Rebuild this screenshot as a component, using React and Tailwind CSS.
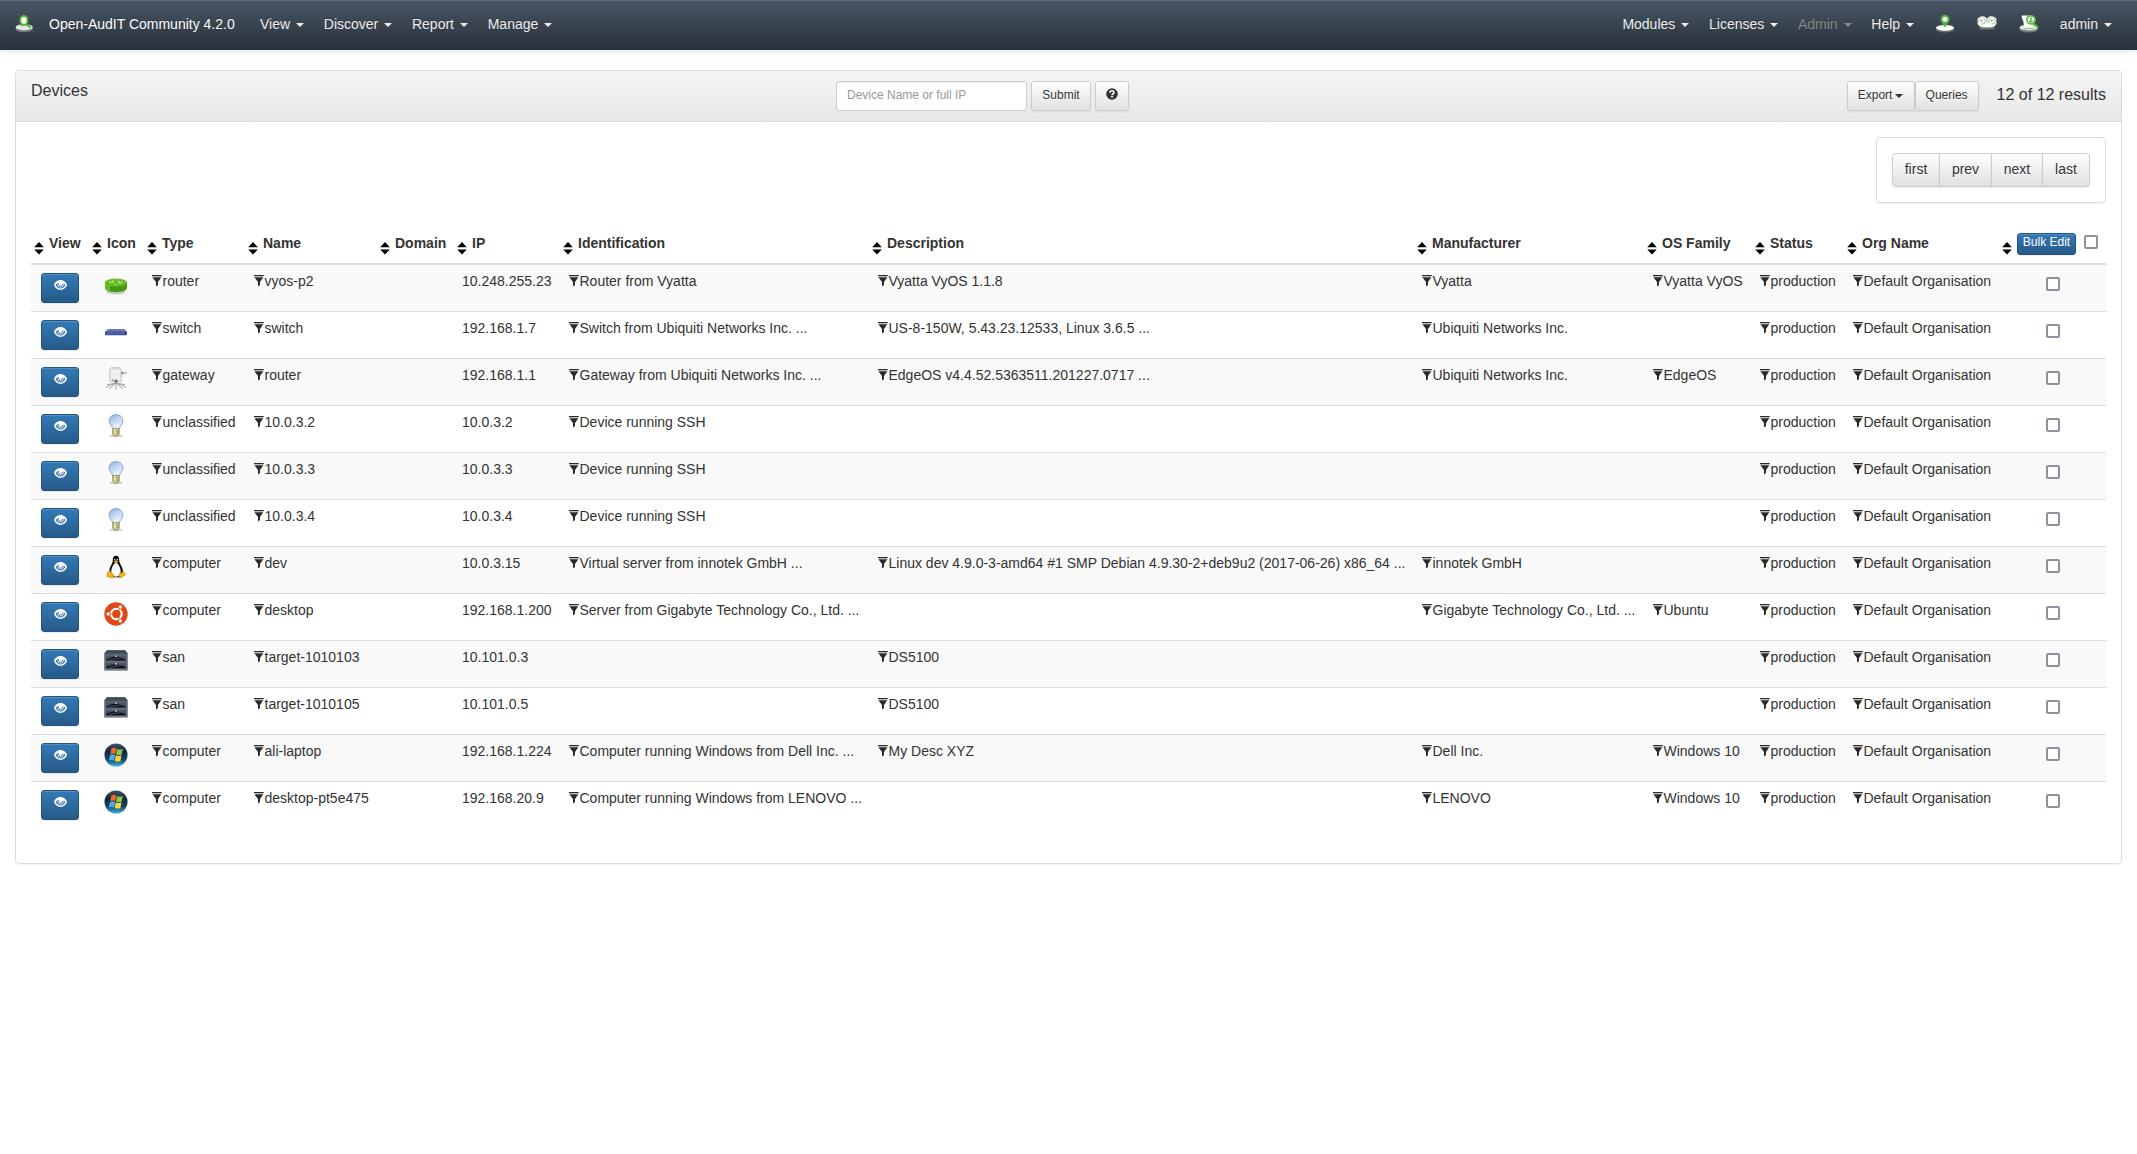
import React from "react";

const Caret = ({ className = "" }) => (
  <span className={`inline-block h-0 w-0 border-x-4 border-t-4 border-x-transparent border-t-current align-middle ${className}`} />
);

const Funnel = () => (
  <svg width="10" height="12" viewBox="0 0 10 12" className="mt-[2px] shrink-0">
    <path d="M0 0H9.7V1.3H0Z" fill="#2a2a2a" />
    <path d="M0.4 2.2H9.3L6 7V10L4 11.5V7Z" fill="#2a2a2a" />
  </svg>
);

const Sort = () => (
  <svg width="10" height="13" viewBox="0 0 10 13" className="mt-[9px] shrink-0">
    <path d="M5 0L9.8 5.2H0.2Z" fill="#000" />
    <path d="M0.2 7.4H9.8L5 12.6Z" fill="#000" />
  </svg>
);

const Eye = () => (
  <svg width="13" height="10" viewBox="0 0 13 10">
    <path fillRule="evenodd" d="M6.5 0C3 0 0.8 2.4 0 5 1 7.8 3.4 10 6.5 10S12 7.8 13 5C12.2 2.4 10 0 6.5 0ZM6.5 1.9C4 1.9 2.6 3.4 1.7 5 2.8 7.1 4.4 8.6 6.5 8.6S10.2 7.1 11.3 5C10.4 3.4 9 1.9 6.5 1.9Z" fill="#fff" />
    <path d="M9 1.8C10.2 3.2 9.9 5.4 8.8 6.5 7.4 7.8 5.2 7.7 4.1 6.4 3.1 5.2 3.1 3.2 4 1.9Z" fill="#fff" />
    <path d="M4.3 3C4.1 5.3 5 6.4 6.6 6.3 7.8 6.2 8.5 5.2 8.3 4" fill="none" stroke="#2c689d" strokeWidth="1" />
  </svg>
);

const RouterIcon = () => (
  <svg width="24" height="24" viewBox="0 0 24 24">
    <ellipse cx="12" cy="18.4" rx="9.5" ry="3" fill="#000" opacity="0.2" />
    <path d="M1 9.5V15C1 17.3 6 19.2 12 19.2S23 17.3 23 15V9.5Z" fill="#48990c" />
    <path d="M1 9.5V15C1 16.4 3 17.7 6 18.5V11Z" fill="#69b92c" />
    <ellipse cx="12" cy="9.5" rx="11" ry="4" fill="#63bb1f" />
    <path d="M5 9.4L10 8.6M8.3 7.4L10 8.6 7 9.8M19 9L14 9.6M16 8L14 9.6 17 10.6M12 6.6L14.6 7.2M10 11.6L13 12.1" stroke="#bfe7a0" strokeWidth="0.8" fill="none" />
  </svg>
);

const SwitchIcon = () => (
  <svg width="24" height="24" viewBox="0 0 24 24">
    <path d="M3.5 9H20.5L22.8 12H1.2Z" fill="#7480ae" />
    <path d="M1 11.4H23V14.3Q23 15.2 22 15.2H2Q1 15.2 1 14.3Z" fill="#3a4f95" />
    <path d="M3 13.3H10M12 13.3H20" stroke="#8f9bc6" strokeWidth="0.7" strokeDasharray="1.4 0.7" />
    <path d="M6 10.3H18" stroke="#4e5f9e" strokeWidth="0.9" strokeDasharray="2 1" />
  </svg>
);

const GatewayIcon = () => (
  <svg width="24" height="24" viewBox="0 0 24 24">
    <path d="M12 16L2 20M12 16L5 22M12 15V22.8M12 16L19 22M12 16L22 20M12 16L3 17.7M12 16L21 17.7" stroke="#999" strokeWidth="0.9" />
    <path d="M17 6H22.5" stroke="#9aa1a5" strokeWidth="1.3" />
    <path d="M17.4 4.2L19.5 6.2 17.4 8.2Z" fill="#2f82b5" />
    <path d="M7.5 0.3H15.5L17.2 2.6V14.3H5.8V2.2Z" fill="#efefed" stroke="#aaa" strokeWidth="0.7" />
    <path d="M7.5 0.5H15.5L16.6 2.4H6.8Z" fill="#d6d6d4" />
    <rect x="8" y="12.2" width="1.6" height="1.4" fill="#5bbb34" />
    <path d="M10.4 15.2V13.7Q12 11.4 13.6 13.7V15.2Z" fill="#80589a" />
  </svg>
);

const BulbIcon = () => (
  <svg width="24" height="24" viewBox="0 0 24 24">
    <defs>
      <linearGradient id="bulb" x1="0" y1="0" x2="0.6" y2="1">
        <stop offset="0" stopColor="#82a7de" />
        <stop offset="0.45" stopColor="#bdd3f2" />
        <stop offset="1" stopColor="#e8f1fc" />
      </linearGradient>
    </defs>
    <ellipse cx="12" cy="21.8" rx="7" ry="1.5" fill="#000" opacity="0.18" />
    <path d="M12 0.6C7.6 0.6 5.1 3.7 5.1 7.1 5.1 10.8 8.3 12 9 15.2H15C15.7 12 18.9 10.8 18.9 7.1 18.9 3.7 16.4 0.6 12 0.6Z" fill="url(#bulb)" stroke="#849fca" strokeWidth="0.9" />
    <path d="M10.5 15V9.5M13.5 15V9.5" stroke="#fff" strokeWidth="0.7" />
    <path d="M8.7 14.6H15.3V19.8L13.8 22H10.2L8.7 19.8Z" fill="#c9c27c" stroke="#7d7a48" strokeWidth="0.6" />
    <path d="M8.8 17H15.2M8.8 19.3H15.2" stroke="#88845a" strokeWidth="0.7" />
    <rect x="10" y="15.3" width="2" height="5" fill="#f5f1bd" opacity="0.8" />
  </svg>
);

const TuxIcon = () => (
  <svg width="24" height="24" viewBox="0 0 24 24">
    <path d="M12 0.8C9.4 0.8 8.7 2.8 8.8 5.5 8.9 8.5 6.5 10.5 5.5 14 5 17 5.5 20.5 8 22.3H16C18.5 20.5 19.5 17 18.6 14 17.5 10.5 15.3 8.5 15.2 5.5 15.2 2.8 14.6 0.8 12 0.8Z" fill="#0c0c0c" />
    <path d="M12 7.5C10 8.5 7.3 12 7.3 16.5 7.5 20 9 21.5 12 21.7 15 21.5 16.7 20 16.7 16.5 16.5 12 14 8.5 12 7.5Z" fill="#fbfbfb" />
    <circle cx="10.8" cy="4.6" r="0.8" fill="#ddd" />
    <circle cx="13.4" cy="4.6" r="0.8" fill="#ddd" />
    <path d="M9.6 6.5L12 5.3 14.6 6.5 12 8.6Z" fill="#efab13" />
    <path d="M3.5 17.2L6.2 15.8 10 20.5Q10.5 22.6 8 23L2.7 21.4Z" fill="#f2b414" stroke="#9c6a05" strokeWidth="0.4" />
    <path d="M15.8 17.8Q18 18.4 19.4 16.6L21.8 19.6 16.8 23Q14.6 23 15 20.5Z" fill="#f2b414" stroke="#9c6a05" strokeWidth="0.4" />
  </svg>
);

const UbuntuIcon = () => (
  <svg width="24" height="24" viewBox="0 0 24 24">
    <circle cx="12" cy="12" r="11.7" fill="#dd4814" />
    <circle cx="12.4" cy="12" r="5.2" fill="none" stroke="#fff" strokeWidth="2.3" />
    <path d="M12.4 12H2M12.4 12L17.4 3.34M12.4 12L17.4 20.66" stroke="#dd4814" strokeWidth="1" />
    <circle cx="12.4" cy="12" r="3.9" fill="#dd4814" />
    <g fill="#fff" stroke="#dd4814" strokeWidth="0.7">
      <circle cx="4.2" cy="12" r="2" />
      <circle cx="16.3" cy="5.1" r="2" />
      <circle cx="16.3" cy="18.9" r="2" />
    </g>
  </svg>
);

const SanIcon = () => (
  <svg width="24" height="24" viewBox="0 0 24 24">
    <path d="M3 1.2H21L23.7 4.6V21.5H0.3V4.6Z" fill="#596070" />
    <path d="M3 1.2H21L23.7 4.6H0.3Z" fill="#434a58" />
    <path d="M2.5 7.2H21.5V11.6H2.5ZM2.5 14.6H21.5V19.2H2.5Z" fill="#4b5261" />
    <path d="M2.5 10.2L9 7.8H14L21.5 10.4V11.6H2.5ZM2.5 17.6L9 15.4H14L21.5 17.8V19.2H2.5Z" fill="#10141c" />
    <path d="M5 10.9L17 8.8M5 18.4L17 16.3" stroke="#5d6575" strokeWidth="0.7" />
    <path d="M11 7.3H13M11 14.9H13" stroke="#d5dae2" strokeWidth="1.1" />
    <path d="M0.3 12.8H23.7" stroke="#767d8b" strokeWidth="0.7" />
    <path d="M0.6 21H23.4" stroke="#989ca5" strokeWidth="1" />
  </svg>
);

const WindowsIcon = () => (
  <svg width="24" height="24" viewBox="0 0 24 24">
    <defs>
      <linearGradient id="orb" x1="0" y1="0" x2="0" y2="1">
        <stop offset="0" stopColor="#3f566e" />
        <stop offset="0.35" stopColor="#10263f" />
        <stop offset="0.7" stopColor="#14476c" />
        <stop offset="1" stopColor="#41b4dc" />
      </linearGradient>
    </defs>
    <circle cx="12" cy="12" r="11.5" fill="url(#orb)" />
    <path d="M7.4 5.4C9 4.4 10.8 4.5 12.4 5.4L11.4 11.1C9.8 10.3 8 10.3 6.2 11.1Z" fill="#ee6a25" />
    <path d="M13 5.9C14.8 6.8 16.8 6.8 18.8 5.9L17.7 11.6C15.8 12.4 13.8 12.4 12 11.5Z" fill="#8fc83d" />
    <path d="M6 11.9C7.8 11.1 9.5 11.1 11.2 11.9L10.2 17.5C8.4 16.7 6.8 16.7 4.9 17.5Z" fill="#4da6e8" />
    <path d="M11.8 12.3C13.6 13.2 15.6 13.2 17.5 12.3L16.4 17.9C14.6 18.9 12.6 18.8 10.8 17.9Z" fill="#fdd33c" />
  </svg>
);

const icons = {
  router: RouterIcon, switch: SwitchIcon, gateway: GatewayIcon, bulb: BulbIcon,
  tux: TuxIcon, ubuntu: UbuntuIcon, san: SanIcon, windows: WindowsIcon,
};

const LogoIcon = () => (
  <svg width="20" height="20" viewBox="0 0 20 20">
    <ellipse cx="9.2" cy="15" rx="8.6" ry="3.3" fill="#777b7e" />
    <ellipse cx="9.2" cy="13.2" rx="8.6" ry="3" fill="#e3e5e4" />
    <path d="M6 10Q9.3 13 12 10L13 12H5.4Z" fill="#61b53d" />
    <rect x="5.4" y="2" width="7" height="8.6" rx="3.4" fill="#fff" stroke="#52b62f" strokeWidth="1.8" />
    <path d="M12.3 10.5L15.4 13.6" stroke="#43a324" strokeWidth="1.7" />
    <path d="M3.5 0.5L4 1M18.5 17.5L19 18" stroke="#aaa" />
  </svg>
);

const PinIcon = () => (
  <svg width="20" height="20" viewBox="0 0 20 20">
    <ellipse cx="10" cy="15.2" rx="9.5" ry="3.3" fill="#6d7275" />
    <ellipse cx="10" cy="13.8" rx="9" ry="2.9" fill="#fff" />
    <path d="M10 14.8C9.5 10.5 5.5 9 5.5 5.2A4.5 4.5 0 0 1 14.5 5.2C14.5 9 10.5 10.5 10 14.8Z" fill="#55b436" />
    <circle cx="10" cy="5.2" r="2.5" fill="#fff" />
  </svg>
);

const BinocularsIcon = () => (
  <svg width="20" height="20" viewBox="0 0 20 20">
    <path d="M1.5 10.5Q10 17.5 18.5 10.5L17 15.4H3Z" fill="#6e7376" />
    <path d="M0.6 4.6Q5 0.4 9 3.4L10 5 11 3.4Q15 0.4 19.4 4.6V10Q17 14 10 13.4 3 14 0.6 10Z" fill="#fff" />
    <circle cx="4.9" cy="6.8" r="3.3" fill="none" stroke="#8cc77d" strokeWidth="0.9" strokeDasharray="6 2" />
    <circle cx="15.1" cy="6.8" r="3.3" fill="none" stroke="#8cc77d" strokeWidth="0.9" strokeDasharray="6 2" />
    <circle cx="4.6" cy="6.6" r="0.9" fill="#678c61" />
    <circle cx="14.8" cy="6.6" r="0.9" fill="#678c61" />
    <path d="M10 5V9" stroke="#8d9691" strokeWidth="0.7" />
  </svg>
);

const AuditIcon = () => (
  <svg width="20" height="20" viewBox="0 0 20 20">
    <ellipse cx="9.7" cy="15.2" rx="9.5" ry="3.2" fill="#777b7e" />
    <ellipse cx="9.7" cy="13.6" rx="9.3" ry="2.8" fill="#e8eae8" />
    <path d="M2.8 1.5H12L15 14.5H5Q4.8 6 2.8 4Z" fill="#f8faf8" />
    <path d="M14.5 9.5L19 13.6" stroke="#59bd36" strokeWidth="2.2" />
    <path d="M5 14.4H15" stroke="#72bd5b" strokeWidth="0.9" />
    <circle cx="12" cy="5.8" r="4.1" fill="#f7fff4" stroke="#55b434" strokeWidth="1.6" />
    <path d="M12 3V7.6M10 7.6H14" stroke="#55a43d" strokeWidth="1.3" />
  </svg>
);

const columns = [
  ["View", "w-[58px] pl-[3px]"], ["Icon", "w-[55px] pl-[3px]"], ["Type", "w-[102px] pl-[3px]"],
  ["Name", "w-[131px] pl-[2px]"], ["Domain", "w-[77px] pl-[3px]"], ["IP", "w-[107px] pl-[3px]"],
  ["Identification", "w-[309px] pl-[2px]"], ["Description", "w-[544px] pl-[2px]"],
  ["Manufacturer", "w-[231px] pl-[3px]"], ["OS Family", "w-[107px] pl-[2px]"],
  ["Status", "w-[93px] pl-[3px]"], ["Org Name", "w-[155px] pl-[2px]"],
];

const devices = [
  ["router", "router", "vyos-p2", "10.248.255.23", "Router from Vyatta", "Vyatta VyOS 1.1.8", "Vyatta", "Vyatta VyOS"],
  ["switch", "switch", "switch", "192.168.1.7", "Switch from Ubiquiti Networks Inc. ...", "US-8-150W, 5.43.23.12533, Linux 3.6.5 ...", "Ubiquiti Networks Inc.", ""],
  ["gateway", "gateway", "router", "192.168.1.1", "Gateway from Ubiquiti Networks Inc. ...", "EdgeOS v4.4.52.5363511.201227.0717 ...", "Ubiquiti Networks Inc.", "EdgeOS"],
  ["bulb", "unclassified", "10.0.3.2", "10.0.3.2", "Device running SSH", "", "", ""],
  ["bulb", "unclassified", "10.0.3.3", "10.0.3.3", "Device running SSH", "", "", ""],
  ["bulb", "unclassified", "10.0.3.4", "10.0.3.4", "Device running SSH", "", "", ""],
  ["tux", "computer", "dev", "10.0.3.15", "Virtual server from innotek GmbH ...", "Linux dev 4.9.0-3-amd64 #1 SMP Debian 4.9.30-2+deb9u2 (2017-06-26) x86_64 ...", "innotek GmbH", ""],
  ["ubuntu", "computer", "desktop", "192.168.1.200", "Server from Gigabyte Technology Co., Ltd. ...", "", "Gigabyte Technology Co., Ltd. ...", "Ubuntu"],
  ["san", "san", "target-1010103", "10.101.0.3", "", "DS5100", "", ""],
  ["san", "san", "target-1010105", "10.101.0.5", "", "DS5100", "", ""],
  ["windows", "computer", "ali-laptop", "192.168.1.224", "Computer running Windows from Dell Inc. ...", "My Desc XYZ", "Dell Inc.", "Windows 10"],
  ["windows", "computer", "desktop-pt5e475", "192.168.20.9", "Computer running Windows from LENOVO ...", "", "LENOVO", "Windows 10"],
];

const NavItem = ({ label, muted }) => (
  <a className={`flex items-center gap-[6px] px-[10px] not-last:-mr-[0.3px] ${muted ? "text-[#888]" : "text-[#eee]"}`}>
    {label}
    <Caret className="mt-px" />
  </a>
);

const Checkbox = ({ className = "" }) => (
  <span className={`block h-[14px] w-[14px] rounded-[2px] border-2 border-[#8f8f9d] bg-white ${className}`} />
);

const Cell = ({ text, filter = true }) => (
  <td className="p-0 pt-[8px] pl-[8px] align-top">
    {text && (
      <div className="flex h-[16px] gap-[0.5px] whitespace-nowrap leading-[16px]">
        {filter && <Funnel />}
        <span>{text}</span>
      </div>
    )}
  </td>
);

const button = "flex items-center justify-center border border-[#ccc] bg-linear-to-b from-white to-[#e0e0e0] text-[#333] shadow-[0_1px_2px_rgba(0,0,0,0.08)] [text-shadow:0_1px_0_#fff]";
const primary = "border border-[#245580] bg-linear-to-b from-[#337ab7] to-[#265a88] text-white shadow-[inset_0_1px_0_rgba(255,255,255,0.15),0_1px_1px_rgba(0,0,0,0.075)] rounded-[3px]";

export default function App() {
  return (
    <div className="min-h-[1154px] bg-white font-['Liberation_Sans',Arial,sans-serif] text-[14px] leading-5 text-[#333]">
      <nav className="flex h-[50px] items-stretch justify-between border-t border-[#5f6878] bg-linear-to-b from-[#485563] to-[#29323c] pb-[3px] shadow-[0_1px_6px_rgba(0,0,0,0.12)] [text-shadow:0_-1px_0_rgba(0,0,0,0.25)]">
        <div className="flex items-stretch pl-[15px]">
          <span className="flex w-[34px] items-center"><LogoIcon /></span>
          <span className="flex w-[201px] items-center whitespace-nowrap text-white">Open-AudIT Community 4.2.0</span>
          {["View", "Discover", "Report", "Manage"].map((l) => <NavItem key={l} label={l} />)}
        </div>
        <div className="flex items-stretch pr-[15px]">
          <NavItem label="Modules" />
          <NavItem label="Licenses" />
          <NavItem label="Admin" muted />
          <NavItem label="Help" />
          <span className="flex w-[42px] items-center justify-center"><PinIcon /></span>
          <span className="flex w-[42px] items-center justify-center"><BinocularsIcon /></span>
          <span className="flex w-[42px] items-center justify-center"><AuditIcon /></span>
          <NavItem label="admin" />
        </div>
      </nav>

      <main className="mx-[15px] mt-5 h-[794px] rounded-[4px] border border-[#ddd] shadow-[0_1px_2px_rgba(0,0,0,0.05)]">
        <header className="grid h-[51px] grid-cols-[820px_1fr_auto] items-start rounded-t-[3px] border-b border-[#ddd] bg-linear-to-b from-[#f5f5f5] to-[#e8e8e8] pr-[15px]">
          <h1 className="pt-[10px] pl-[15px] text-[16px]">Devices</h1>
          <form className="flex gap-[5px] pt-[10px] text-[12px]">
            <input className="h-[30px] w-[191px] rounded-[3px] border border-[#ccc] bg-white px-[10px] pb-[2px] shadow-[inset_0_1px_1px_rgba(0,0,0,0.075)] placeholder:text-[#999]" placeholder="Device Name or full IP" />
            <button type="button" className={`${button} -ml-px h-[30px] w-[60px] rounded-[3px] pb-[2px]`}>Submit</button>
            <button type="button" className={`${button} -ml-px h-[30px] w-[34px] rounded-[3px] pb-[4px]`}>
              <svg width="12" height="12" viewBox="0 0 12 12">
                <circle cx="6" cy="6" r="5.8" fill="#333" />
                <path d="M4 4.7Q4 2.8 6 2.8T8 4.5C8 5.7 6.1 5.8 6.1 7.2" fill="none" stroke="#fff" strokeWidth="1.6" />
                <rect x="5.2" y="8" width="1.7" height="1.6" fill="#fff" />
              </svg>
            </button>
          </form>
          <div className="flex pt-[10px]">
            <button type="button" className={`${button} h-[30px] w-[68px] gap-[3px] rounded-[3px] pb-[2px] text-[12px]`}>Export<Caret className="mt-px" /></button>
            <button type="button" className={`${button} h-[30px] w-[64px] rounded-[3px] pb-[2px] text-[12px]`}>Queries</button>
            <span className="pt-[4px] pl-[18px] text-[16px]">12 of 12 results</span>
          </div>
        </header>

        <section className="px-[15px] pt-[15px]">
          <div className="flex justify-end">
            <div className="flex h-[66px] w-[230px] items-center justify-center rounded-[4px] border border-[#ddd] shadow-[0_1px_1px_rgba(0,0,0,0.05)]">
              <div className="flex h-[34px] [&>button]:-mr-px [&>button]:pb-[2px] [&>button:first-child]:rounded-l-[4px] [&>button:last-child]:mr-0 [&>button:last-child]:rounded-r-[4px]">
                <button type="button" className={`${button} w-[48px]`}>first</button>
                <button type="button" className={`${button} w-[53px]`}>prev</button>
                <button type="button" className={`${button} w-[52px]`}>next</button>
                <button type="button" className={`${button} w-[48px]`}>last</button>
              </div>
            </div>
          </div>

          <table className="mt-[20px] w-[2075px] table-fixed border-separate border-spacing-0">
            <thead>
              <tr className="h-[42px]">
                {columns.map(([name, layout]) => (
                  <th key={name} className={`${layout} border-b-2 border-[#ddd] py-0 pr-0 text-left align-top`}>
                    <div className="flex gap-[5px] whitespace-nowrap pt-[10px]"><Sort /><span>{name}</span></div>
                  </th>
                ))}
                <th className="w-[106px] border-b-2 border-[#ddd] p-0 pl-[2px] text-left align-top">
                  <div className="flex items-start pt-[10px]">
                    <Sort />
                    <button type="button" className={`${primary} ml-[5px] h-[22px] w-[59px] pb-[4px] text-[12px] leading-[16px] font-normal`}>Bulk Edit</button>
                    <Checkbox className="ml-[8px] mt-[2px]" />
                  </div>
                </th>
              </tr>
            </thead>
            <tbody>
              {devices.map(([icon, type, name, ip, ident, desc, maker, os], i) => {
                const Icon = icons[icon];
                return (
                  <tr key={i} className="h-[47px] odd:bg-[#f9f9f9] first:h-[46px] [&+tr>td]:border-t [&+tr>td]:border-[#ddd]">
                    <td className="p-0 pt-[8px] pl-[10px] align-top">
                      <button type="button" className={`${primary} flex h-[30px] w-[38px] justify-center pt-[6px]`}><Eye /></button>
                    </td>
                    <td className="p-0 pt-[8px] pl-[15px] align-top"><Icon /></td>
                    <Cell text={type} />
                    <Cell text={name} />
                    <td />
                    <Cell text={ip} filter={false} />
                    <Cell text={ident} />
                    <Cell text={desc} />
                    <Cell text={maker} />
                    <Cell text={os} />
                    <Cell text="production" />
                    <Cell text="Default Organisation" />
                    <td className="p-0 pt-[12px] pl-[46px] align-top"><Checkbox /></td>
                  </tr>
                );
              })}
            </tbody>
          </table>
        </section>
      </main>
    </div>
  );
}
